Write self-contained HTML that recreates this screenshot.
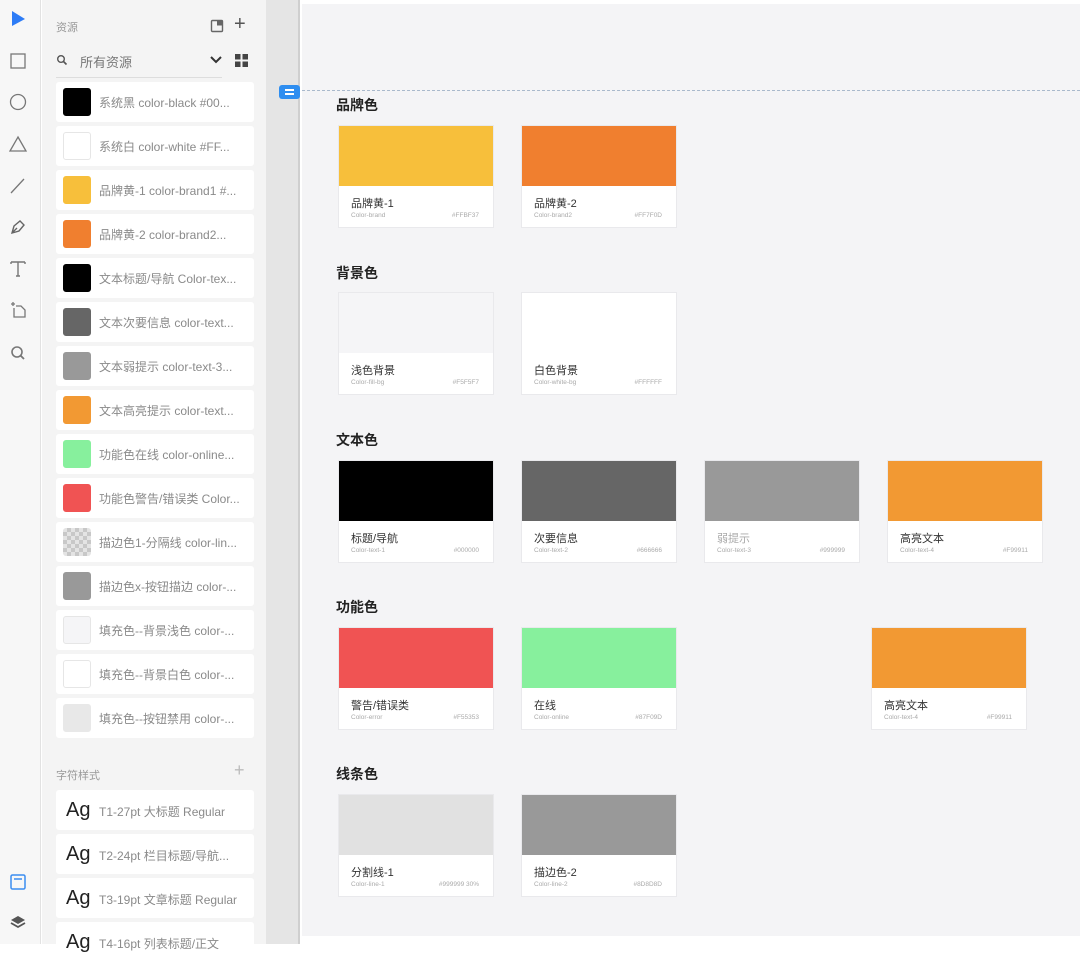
<!DOCTYPE html>
<html><head><meta charset="utf-8">
<style>
*{margin:0;padding:0;box-sizing:border-box}
body{width:1080px;height:944px;overflow:hidden;background:#fff;font-family:"Liberation Sans","Noto Sans CJK SC",sans-serif;position:relative}
.tb{position:absolute;left:0;top:0;width:41px;height:944px;background:#f7f7f7;border-right:1px solid #e2e2e2}
.tb svg{position:absolute;left:8px}
.panel{position:absolute;left:42px;top:0;width:224px;height:944px;background:#f4f4f4}
.strip{position:absolute;left:266px;top:0;width:34px;height:944px;background:#e5e5e5;border-right:2px solid #cfcfcf}
.canvas{position:absolute;left:302px;top:4px;width:778px;height:932px;background:#f4f4f6}
.item{position:absolute;left:14px;width:198px;height:40px;background:#fff;border-radius:3px}
.item .sw{position:absolute;left:7px;top:6px;width:28px;height:28px;border-radius:3px;border:1px solid #e6e6e6}
.item .t{position:absolute;left:43px;top:12px;font-size:12px;color:#8a8a8a;white-space:nowrap}
.ag{position:absolute;left:10px;top:9px;font-size:20px;color:#222}
.item .t2{position:absolute;left:43px;top:13px;font-size:12px;color:#8a8a8a;white-space:nowrap}
.h{position:absolute;left:336px;font-size:14px;color:#222;font-weight:bold}
.card{position:absolute;width:156px;height:103px;background:#fff;border:1px solid #e9e9ec}
.card .c{height:60px}
.card .n{position:absolute;left:12px;top:69px;font-size:11px;color:#333}
.card .s{position:absolute;left:12px;top:86px;font-size:6.5px;color:#aaa}
.card .x{position:absolute;right:14px;top:86px;font-size:6.5px;color:#aaa}
</style></head><body>
<div class="tb">
<svg style="top:9px" width="20" height="20" viewBox="0 0 20 20"><path d="M4 2 L17 10 L4 17 Z" fill="#2d7cf6"/></svg>
<svg style="top:51px" width="20" height="20" viewBox="0 0 20 20"><rect x="3" y="3" width="14" height="14" fill="none" stroke="#777" stroke-width="1.3"/></svg>
<svg style="top:92px" width="20" height="20" viewBox="0 0 20 20"><circle cx="10" cy="10" r="7.5" fill="none" stroke="#777" stroke-width="1.3"/></svg>
<svg style="top:134px" width="20" height="20" viewBox="0 0 20 20"><path d="M10 3 L18 17 L2 17 Z" fill="none" stroke="#777" stroke-width="1.3"/></svg>
<svg style="top:176px" width="20" height="20" viewBox="0 0 20 20"><path d="M3 17 L16 3" stroke="#777" stroke-width="1.3"/></svg>
<svg style="top:217px" width="20" height="20" viewBox="0 0 20 20"><path d="M4 16 L6 9 L12 4 L16 8 L11 14 Z M4 16 L9 11" fill="none" stroke="#666" stroke-width="1.4"/></svg>
<svg style="top:259px" width="20" height="20" viewBox="0 0 20 20"><path d="M3 3 H17 M10 3 V17 M3 3 V5 M17 3 V5 M8 17 H12" fill="none" stroke="#777" stroke-width="1.4"/></svg>
<svg style="top:300px" width="20" height="20" viewBox="0 0 20 20"><path d="M5 2 V6 M3 4 H7 M6 8 V17 H17 V10 L13 6 H8" fill="none" stroke="#777" stroke-width="1.3"/></svg>
<svg style="top:343px" width="20" height="20" viewBox="0 0 20 20"><circle cx="9" cy="9" r="5" fill="none" stroke="#777" stroke-width="1.6"/><path d="M12.5 12.5 L16 16" stroke="#777" stroke-width="1.8"/></svg>
<svg style="top:872px" width="20" height="20" viewBox="0 0 20 20"><rect x="3" y="3" width="14" height="14" rx="1.5" fill="none" stroke="#3b8df0" stroke-width="1.5"/><path d="M6 7 H14" stroke="#3b8df0" stroke-width="1.5"/></svg>
<svg style="top:912px" width="20" height="20" viewBox="0 0 20 20"><path d="M10 4 L17 8 L10 12 L3 8 Z" fill="#555"/><path d="M3 11 L10 15 L17 11" fill="none" stroke="#555" stroke-width="1.8"/></svg>
</div>
<div class="panel">
<div style="position:absolute;left:14px;top:19px;font-size:11px;color:#999">资源</div>
<svg style="position:absolute;left:168px;top:19px" width="14" height="14" viewBox="0 0 14 14"><rect x="1.5" y="1.5" width="11" height="11" rx="1" fill="none" stroke="#666" stroke-width="1.4"/><rect x="7" y="1.5" width="5.5" height="5" fill="#666"/></svg>
<div style="position:absolute;left:192px;top:13px;font-size:20px;color:#555;font-weight:300">+</div>
<svg style="position:absolute;left:14px;top:54px" width="12" height="12" viewBox="0 0 12 12"><circle cx="5" cy="5" r="3.3" fill="none" stroke="#555" stroke-width="1.4"/><path d="M7.5 7.5 L10.5 10.5" stroke="#555" stroke-width="1.6"/></svg>
<div style="position:absolute;left:38px;top:52px;font-size:13px;color:#777">所有资源</div>
<svg style="position:absolute;left:167px;top:55px" width="14" height="10" viewBox="0 0 14 10"><path d="M2 2 L7 7 L12 2" fill="none" stroke="#333" stroke-width="2"/></svg>
<svg style="position:absolute;left:193px;top:54px" width="13" height="13" viewBox="0 0 13 13"><rect x="0" y="0" width="5.5" height="5.5" fill="#444"/><rect x="7.5" y="0" width="5.5" height="5.5" fill="#444"/><rect x="0" y="7.5" width="5.5" height="5.5" fill="#444"/><rect x="7.5" y="7.5" width="5.5" height="5.5" fill="#444"/></svg>
<div style="position:absolute;left:14px;top:77px;width:166px;height:1px;background:#ddd"></div>

<div class="item" style="top:82px"><div class="sw" style="background:#000;border-color:#000"></div><div class="t">系统黑 color-black #00...</div></div>
<div class="item" style="top:126px"><div class="sw" style="background:#fff"></div><div class="t">系统白 color-white #FF...</div></div>
<div class="item" style="top:170px"><div class="sw" style="background:#f7bf3b;border-color:#f7bf3b"></div><div class="t">品牌黄-1 color-brand1 #...</div></div>
<div class="item" style="top:214px"><div class="sw" style="background:#f07f2f;border-color:#f07f2f"></div><div class="t">品牌黄-2 color-brand2...</div></div>
<div class="item" style="top:258px"><div class="sw" style="background:#000;border-color:#000"></div><div class="t">文本标题/导航 Color-tex...</div></div>
<div class="item" style="top:302px"><div class="sw" style="background:#666;border-color:#666"></div><div class="t">文本次要信息 color-text...</div></div>
<div class="item" style="top:346px"><div class="sw" style="background:#999;border-color:#999"></div><div class="t">文本弱提示 color-text-3...</div></div>
<div class="item" style="top:390px"><div class="sw" style="background:#f29933;border-color:#f29933"></div><div class="t">文本高亮提示 color-text...</div></div>
<div class="item" style="top:434px"><div class="sw" style="background:#87f09d;border-color:#87f09d"></div><div class="t">功能色在线 color-online...</div></div>
<div class="item" style="top:478px"><div class="sw" style="background:#f05353;border-color:#f05353"></div><div class="t">功能色警告/错误类 Color...</div></div>
<div class="item" style="top:522px"><div class="sw" style="border:none;background-color:#e4e4e4;background-image:linear-gradient(45deg,#c8c8c8 25%,transparent 25%,transparent 75%,#c8c8c8 75%),linear-gradient(45deg,#c8c8c8 25%,transparent 25%,transparent 75%,#c8c8c8 75%);background-size:8px 8px;background-position:0 0,4px 4px"></div><div class="t">描边色1-分隔线 color-lin...</div></div>
<div class="item" style="top:566px"><div class="sw" style="background:#999;border-color:#999"></div><div class="t">描边色x-按钮描边 color-...</div></div>
<div class="item" style="top:610px"><div class="sw" style="background:#f5f5f7"></div><div class="t">填充色--背景浅色 color-...</div></div>
<div class="item" style="top:654px"><div class="sw" style="background:#fff"></div><div class="t">填充色--背景白色 color-...</div></div>
<div class="item" style="top:698px"><div class="sw" style="background:#e8e8e8;border-color:#e8e8e8"></div><div class="t">填充色--按钮禁用 color-...</div></div>

<div style="position:absolute;left:14px;top:767px;font-size:11px;color:#999">字符样式</div>
<div style="position:absolute;left:192px;top:760px;font-size:18px;color:#bbb;font-weight:300">+</div>
<div class="item" style="top:790px"><div class="ag">Ag</div><div class="t2">T1-27pt 大标题 Regular</div></div>
<div class="item" style="top:834px"><div class="ag">Ag</div><div class="t2">T2-24pt 栏目标题/导航...</div></div>
<div class="item" style="top:878px"><div class="ag">Ag</div><div class="t2">T3-19pt 文章标题 Regular</div></div>
<div class="item" style="top:922px"><div class="ag">Ag</div><div class="t2">T4-16pt 列表标题/正文</div></div>
</div>
<div class="strip"></div>
<div class="canvas"></div>
<div style="position:absolute;left:302px;top:90px;width:778px;border-top:1.5px dashed #a9b9cc"></div>
<div style="position:absolute;left:279px;top:85px;width:21px;height:14px;background:#2f8ef0;border-radius:3px"><div style="position:absolute;left:6px;top:4px;width:9px;height:2px;background:#fff"></div><div style="position:absolute;left:6px;top:8px;width:9px;height:2px;background:#fff"></div></div>

<div class="h" style="top:95px">品牌色</div>
<div class="card" style="left:338px;top:125px"><div class="c" style="background:#f7bf3b"></div><div class="n">品牌黄-1</div><div class="s">Color-brand</div><div class="x">#FFBF37</div></div>
<div class="card" style="left:521px;top:125px"><div class="c" style="background:#f07f2f"></div><div class="n">品牌黄-2</div><div class="s">Color-brand2</div><div class="x">#FF7F0D</div></div>

<div class="h" style="top:263px">背景色</div>
<div class="card" style="left:338px;top:292px"><div class="c" style="background:#f5f5f7"></div><div class="n">浅色背景</div><div class="s">Color-fill-bg</div><div class="x">#F5F5F7</div></div>
<div class="card" style="left:521px;top:292px"><div class="c" style="background:#fff"></div><div class="n">白色背景</div><div class="s">Color-white-bg</div><div class="x">#FFFFFF</div></div>

<div class="h" style="top:430px">文本色</div>
<div class="card" style="left:338px;top:460px"><div class="c" style="background:#000"></div><div class="n">标题/导航</div><div class="s">Color-text-1</div><div class="x">#000000</div></div>
<div class="card" style="left:521px;top:460px"><div class="c" style="background:#666"></div><div class="n">次要信息</div><div class="s">Color-text-2</div><div class="x">#666666</div></div>
<div class="card" style="left:704px;top:460px"><div class="c" style="background:#999"></div><div class="n" style="color:#aaa">弱提示</div><div class="s">Color-text-3</div><div class="x">#999999</div></div>
<div class="card" style="left:887px;top:460px"><div class="c" style="background:#f29933"></div><div class="n">高亮文本</div><div class="s">Color-text-4</div><div class="x">#F99911</div></div>

<div class="h" style="top:597px">功能色</div>
<div class="card" style="left:338px;top:627px"><div class="c" style="background:#f05353"></div><div class="n">警告/错误类</div><div class="s">Color-error</div><div class="x">#F55353</div></div>
<div class="card" style="left:521px;top:627px"><div class="c" style="background:#87f09d"></div><div class="n">在线</div><div class="s">Color-online</div><div class="x">#87F09D</div></div>
<div class="card" style="left:871px;top:627px"><div class="c" style="background:#f29933"></div><div class="n">高亮文本</div><div class="s">Color-text-4</div><div class="x">#F99911</div></div>

<div class="h" style="top:764px">线条色</div>
<div class="card" style="left:338px;top:794px"><div class="c" style="background:#e1e1e1"></div><div class="n">分割线-1</div><div class="s">Color-line-1</div><div class="x">#999999 30%</div></div>
<div class="card" style="left:521px;top:794px"><div class="c" style="background:#999"></div><div class="n">描边色-2</div><div class="s">Color-line-2</div><div class="x">#8D8D8D</div></div>
</body></html>
